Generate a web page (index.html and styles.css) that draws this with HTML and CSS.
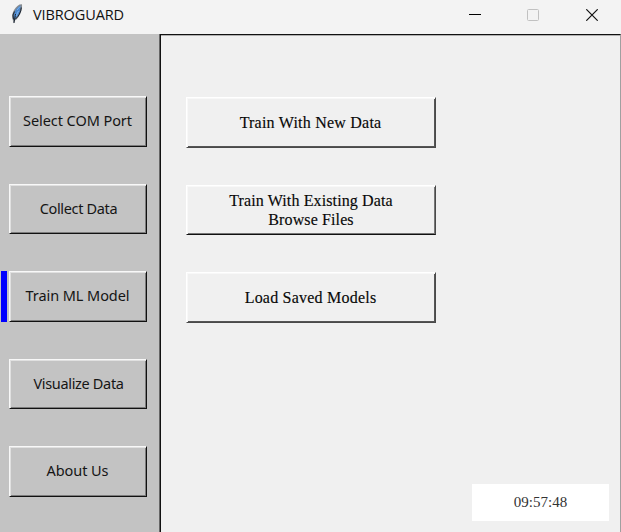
FILE: index.html
```
<!DOCTYPE html>
<html lang="en">
<head>
<meta charset="utf-8">
<title>VIBROGUARD</title>
<link rel="stylesheet" href="styles.css">
</head>
<body>
<div class="window">
  <header class="titlebar">
    <svg class="feather" width="16" height="22" viewBox="0 0 16 22">
      <path d="M4.500 20.500 3.700 16.500C1.800 12.500 4.500 5 10.500 1.500L13 1.300C13.500 6.500 11.500 13 7 17L5.300 17.500Z" fill="#858b92"/>
      <path d="M5 16C3.800 11.500 6 6 11.200 2.500C12 7 10.500 13 5 16Z" fill="#4a86cb"/>
      <path d="M5.500 8.500 4 12 4.500 16.500M12.300 4.500C12 9 9.500 13.500 6.500 16M6.500 11 5 20" fill="none" stroke="#17202c"/>
      <path d="M8 7 11 3.500M7 13 9.500 8" stroke="#79b1ee"/>
    </svg>
    <h1 class="title">VIBROGUARD</h1>
    <div class="controls">
      <svg width="12" height="12" viewBox="0 0 12 12"><path d="M0 5.500H12" stroke="#000"/></svg>
      <svg width="12" height="12" viewBox="0 0 12 12"><rect x=".5" y=".5" width="11" height="11" rx="1" fill="none" stroke="#c1c1c1"/></svg>
      <svg width="12" height="12" viewBox="0 0 12 12"><path d="M.3.300 11.700 11.700M11.700.300.300 11.700" stroke="#111" stroke-width="1.200"/></svg>
    </div>
  </header>
  <div class="body">
    <nav class="sidebar">
      <div class="item"><button class="btn">Select COM Port</button></div>
      <div class="item"><button class="btn snug">Collect Data</button></div>
      <div class="item active"><button class="btn">Train ML Model</button></div>
      <div class="item"><button class="btn snug">Visualize Data</button></div>
      <div class="item"><button class="btn">About Us</button></div>
    </nav>
    <main class="main">
      <div class="actions">
        <button class="btn action">Train With New Data</button>
        <button class="btn action dark-edge">Train With Existing Data<br>Browse Files</button>
        <button class="btn action">Load Saved Models</button>
      </div>
      <div class="clock">09:57:48</div>
    </main>
  </div>
</div>
</body>
</html>
```
FILE: styles.css
```
* { box-sizing: border-box; }
body { margin: 0; overflow: hidden; }
.window { width: 621px; height: 532px; display: flex; flex-direction: column; background: #f0f0f0; }
.titlebar { height: 34px; flex: none; display: flex; align-items: flex-start; padding: 3px 23px 0 9px; background: #f3f3f3; }
.feather { flex: none; }
.title { margin: 2px 0 0 8px; font: 400 14.5px/20px "Open Sans", sans-serif; letter-spacing: -0.1px; color: #111; }
.controls { margin: 6px 0 0 auto; display: grid; grid-template-columns: 58px 59px 12px; }
.body { flex: 1; min-height: 0; display: flex; }
.sidebar { width: 160px; flex: none; padding-top: 62px; background: #c3c3c3; border-right: 1px solid #666; display: flex; flex-direction: column; gap: 37px; }
.item { height: 50.500px; flex: none; padding-left: 3px; border-left: 6px solid transparent; display: flex; }
.item.active { margin-left: 1px; padding-left: 2px; border-left-color: #00f; }
.btn {
  width: 138px; height: 50.500px; padding: 0 1px 2px 0; border: solid; border-width: 1px;
  border-color: #f8f8f8 #111 #111 #f8f8f8; border-radius: 0; background: #c3c3c3;
  box-shadow: inset 1px 1px #e0e0e0, inset -1px -1px #7c7c7c; color: #151515;
  font: 400 14.5px/19px "Noto Sans", sans-serif; letter-spacing: -0.07px; white-space: nowrap;
}
.snug { padding: 0 0 1px 1px; letter-spacing: -0.33px; }
.main { flex: 1; padding: 62px 11px 11px 25px; border: solid #111; border-width: 1px 0 0 1px; border-right: 1px solid #a0a0a0; box-shadow: inset 0 1px #b0b0b0; display: flex; flex-direction: column; justify-content: space-between; }
.actions { display: flex; flex-direction: column; gap: 37px; }
.action {
  width: 250px; padding: 0 1px 0 0; background: #f0f0f0; border-color: #fff #4a4a4a #4a4a4a #fff;
  box-shadow: inset 1px 1px #f8f8f8, inset -1px -1px #555; color: #080808;
  font: 400 16px/19px "Liberation Serif", serif; letter-spacing: 0.22px;
  -webkit-text-stroke: 0.15px #080808;
}
.dark-edge { padding: 1px 0 0; letter-spacing: 0.12px; border-bottom-color: #111; box-shadow: inset 1px 1px #f8f8f8, inset -1px -1px #777; }
.clock { align-self: flex-end; width: 137px; height: 37px; background: #fff; color: #333; text-align: center; font: 400 15px/37px "Liberation Serif", serif; }
```
